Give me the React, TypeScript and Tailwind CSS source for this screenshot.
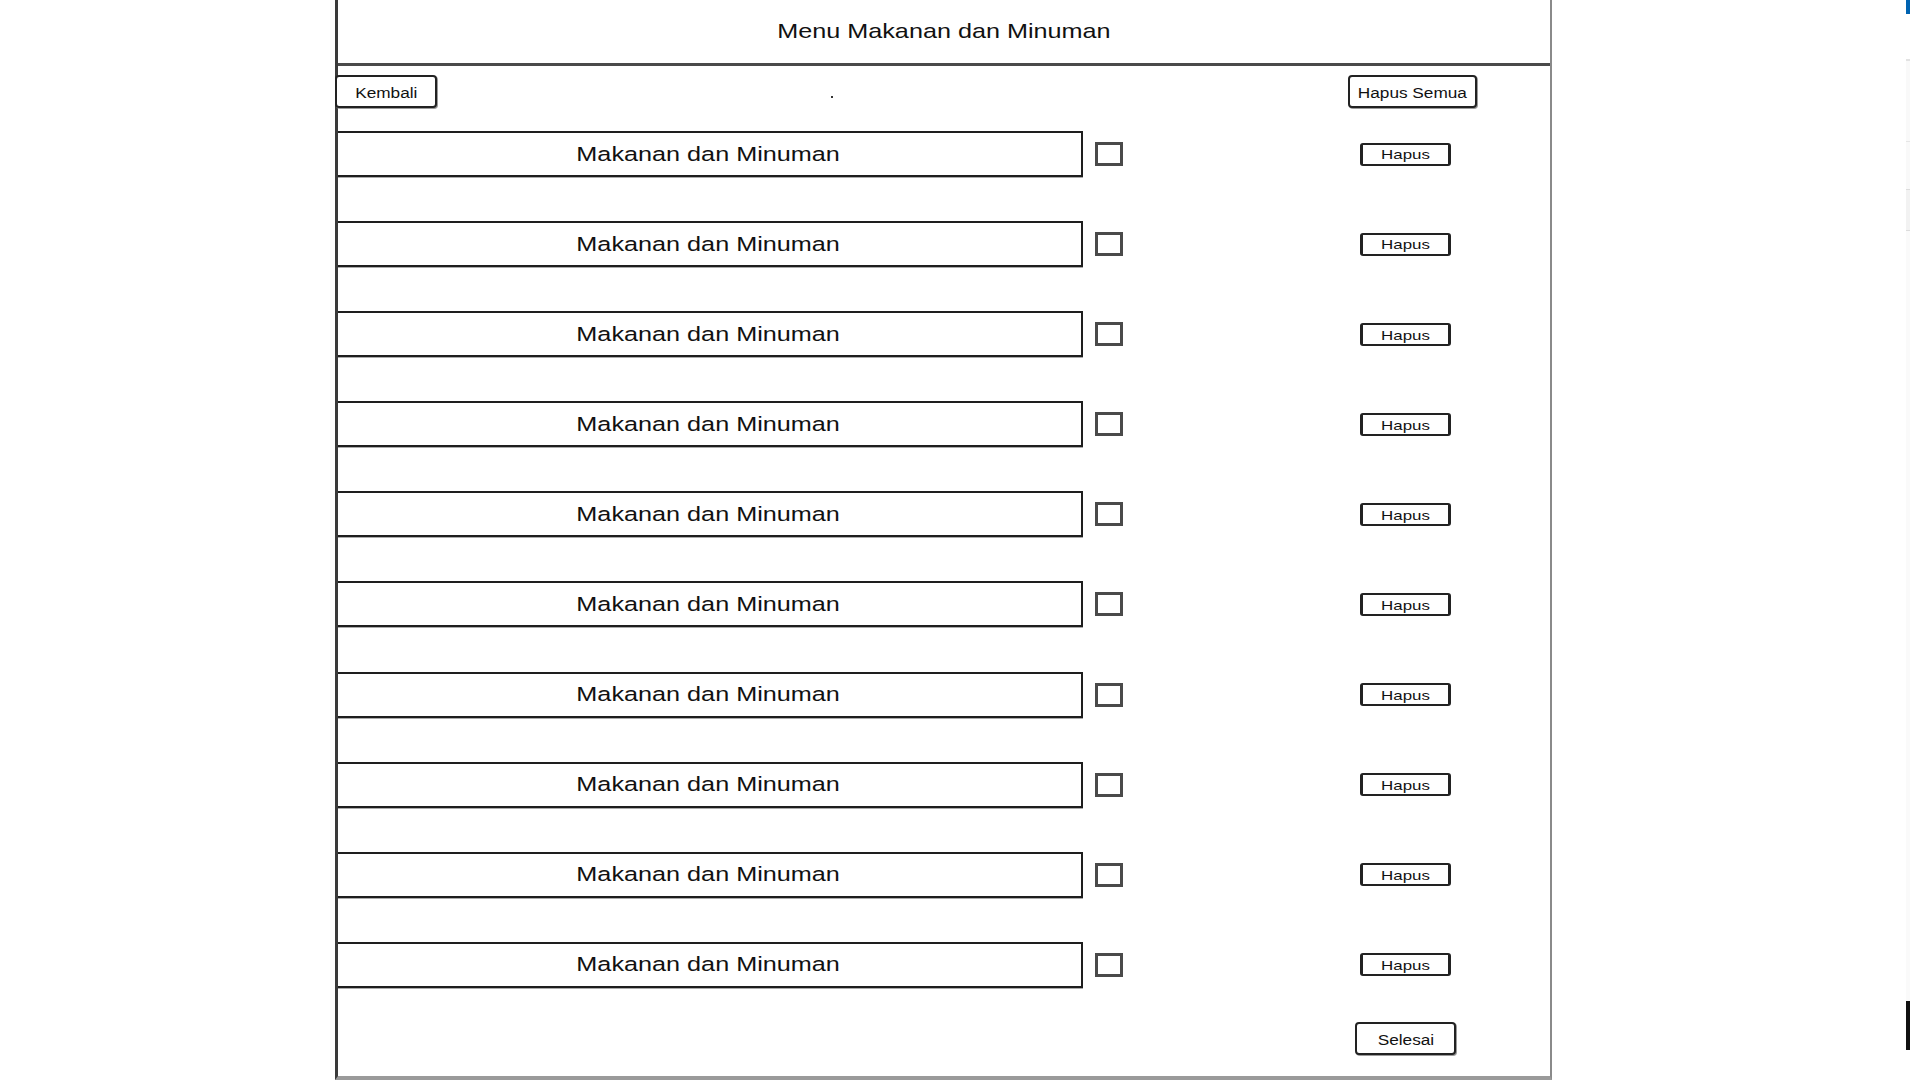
import React from "react";

const items = Array.from({ length: 10 }, (_, i) => ({ id: i + 1, name: "Makanan dan Minuman" }));

function SketchButton({ label, className }: { label: string; className: string }) {
  return (
    <button
      className={`bg-white flex items-center justify-center rounded-[4px] border-2 border-[#222] text-[#111] shadow-[1px_1px_0_#9a9a9a] pt-[4px] ${className}`}
    >
      <span className="inline-block scale-x-[1.23]">{label}</span>
    </button>
  );
}

export default function App() {
  return (
    <div className="w-[1920px] h-[1080px] bg-white flex overflow-hidden font-['Liberation_Sans',Arial,sans-serif] text-[#111]">
      <div className="w-[335px] shrink-0" />

      {/* mockup frame */}
      <div className="w-[1217px] h-[1080px] shrink-0 flex flex-col border-l-[3px] border-l-[#3a3a3a] border-r-2 border-r-[#8a8a8a] border-b-4 border-b-[#9a9a9a]">
        <header className="h-[66px] shrink-0 flex items-center justify-center border-b-[3px] border-b-[#4a4a4a] pb-[1px]">
          <h1 className="text-[21px] inline-block scale-x-[1.2]">Menu Makanan dan Minuman</h1>
        </header>

        <div className="h-[65px] shrink-0 flex items-start pt-[9px]">
          <SketchButton label="Kembali" className="-ml-[3px] w-[102px] h-[33px] text-[14px]" />
          <span className="ml-[394px] mt-[21px] w-[2px] h-[2px] bg-[#333]" />
          <SketchButton label="Hapus Semua" className="ml-[515px] w-[129px] h-[33px] text-[14px]" />
        </div>

        <div className="flex flex-col gap-[44.1px]">
          {items.map((item) => (
            <div key={item.id} className="h-[46px] flex items-center">
              <div className="w-[745px] h-[46px] shrink-0 flex items-center justify-center border-y-2 border-r-2 border-[#1e1e1e] shadow-[0_1px_0_#aaa]">
                <span className="text-[20.5px] inline-block scale-x-[1.23] -ml-[3px]">{item.name}</span>
              </div>
              <input
                type="checkbox"
                className="appearance-none ml-[12px] w-[28px] h-[24px] shrink-0 border-[3px] border-[#4a4a4a] bg-white"
              />
              <button className="ml-[237px] w-[91px] h-[23px] shrink-0 bg-white rounded-[3px] border-y-2 border-x-[3px] border-[#222] flex items-center justify-center pt-[3px] text-[13.5px]">
                <span className="inline-block scale-x-[1.25]">Hapus</span>
              </button>
            </div>
          ))}
        </div>

        <div className="flex pt-[34px]">
          <SketchButton label="Selesai" className="ml-[1017px] w-[101px] h-[33px] text-[14px]" />
        </div>
      </div>

      <div className="w-[354px] shrink-0" />

      {/* edge of neighbouring window */}
      <div className="w-[4px] shrink-0 flex flex-col">
        <div className="h-[14px] bg-[#0063b1]" />
        <div className="h-[45px]" />
        <div className="h-[82px] bg-[#f9f9f9] border-t-2 border-[#e2e2e2]" />
        <div className="h-[48px] bg-[#f9f9f9] border-t border-[#e6e6e6]" />
        <div className="h-[42px] bg-[#f2f2f2] border-y border-[#dcdcdc]" />
        <div className="h-[770px] bg-[#fafafa]" />
        <div className="h-[49px] bg-[#111]" />
      </div>
    </div>
  );
}
